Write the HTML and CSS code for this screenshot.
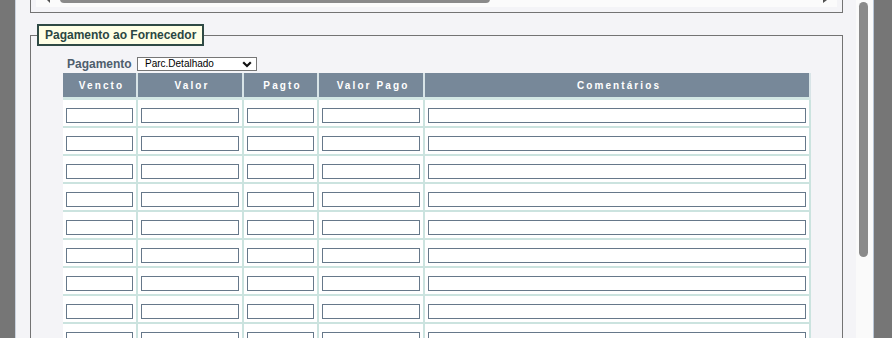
FILE: index.html
```html
<!DOCTYPE html>
<html lang="pt">
<head>
<meta charset="utf-8">
<title>Pagamento ao Fornecedor</title>
<link rel="stylesheet" href="styles.css">
</head>
<body>
<div class="side side-left"></div>
<div class="frame">
  <div class="content">
    <div class="topbox">
      <div class="hscroll">
        <svg class="hscroll-svg" width="801" height="7" viewBox="0 0 801 7">
          <polygon points="11,0 14,-3 14,3" fill="#505050"/>
          <rect x="24" y="-6" width="430" height="9" rx="4" fill="#8a8a8a"/>
          <polygon points="791,0 787,-3 787,3" fill="#505050"/>
        </svg>
      </div>
    </div>
    <fieldset class="panel">
      <legend class="panel-legend">Pagamento ao Fornecedor</legend>
      <div class="panel-body">
        <div class="pay-row">
          <span class="pay-label">Pagamento</span>
          <div class="select">
            <span class="select-text">Parc.Detalhado</span>
            <svg class="select-chevron" width="10" height="7" viewBox="0 0 10 7">
              <path d="M1.2 1.3 L5 5 L8.8 1.3" fill="none" stroke="#111" stroke-width="2.2"/>
            </svg>
          </div>
        </div>
        <table class="grid">
          <thead>
            <tr>
              <th class="c-venc">Vencto</th>
              <th class="c-valor">Valor</th>
              <th class="c-pagto">Pagto</th>
              <th class="c-vpago">Valor Pago</th>
              <th class="c-coment">Comentários</th>
            </tr>
          </thead>
          <tbody>
            <tr><td><input class="cell-input" type="text"></td><td><input class="cell-input" type="text"></td><td><input class="cell-input" type="text"></td><td><input class="cell-input" type="text"></td><td><input class="cell-input" type="text"></td></tr>
            <tr><td><input class="cell-input" type="text"></td><td><input class="cell-input" type="text"></td><td><input class="cell-input" type="text"></td><td><input class="cell-input" type="text"></td><td><input class="cell-input" type="text"></td></tr>
            <tr><td><input class="cell-input" type="text"></td><td><input class="cell-input" type="text"></td><td><input class="cell-input" type="text"></td><td><input class="cell-input" type="text"></td><td><input class="cell-input" type="text"></td></tr>
            <tr><td><input class="cell-input" type="text"></td><td><input class="cell-input" type="text"></td><td><input class="cell-input" type="text"></td><td><input class="cell-input" type="text"></td><td><input class="cell-input" type="text"></td></tr>
            <tr><td><input class="cell-input" type="text"></td><td><input class="cell-input" type="text"></td><td><input class="cell-input" type="text"></td><td><input class="cell-input" type="text"></td><td><input class="cell-input" type="text"></td></tr>
            <tr><td><input class="cell-input" type="text"></td><td><input class="cell-input" type="text"></td><td><input class="cell-input" type="text"></td><td><input class="cell-input" type="text"></td><td><input class="cell-input" type="text"></td></tr>
            <tr><td><input class="cell-input" type="text"></td><td><input class="cell-input" type="text"></td><td><input class="cell-input" type="text"></td><td><input class="cell-input" type="text"></td><td><input class="cell-input" type="text"></td></tr>
            <tr><td><input class="cell-input" type="text"></td><td><input class="cell-input" type="text"></td><td><input class="cell-input" type="text"></td><td><input class="cell-input" type="text"></td><td><input class="cell-input" type="text"></td></tr>
            <tr><td><input class="cell-input" type="text"></td><td><input class="cell-input" type="text"></td><td><input class="cell-input" type="text"></td><td><input class="cell-input" type="text"></td><td><input class="cell-input" type="text"></td></tr>
            <tr><td><input class="cell-input" type="text"></td><td><input class="cell-input" type="text"></td><td><input class="cell-input" type="text"></td><td><input class="cell-input" type="text"></td><td><input class="cell-input" type="text"></td></tr>
          </tbody>
        </table>
      </div>
    </fieldset>
  </div>
  <div class="vscroll">
    <div class="vthumb"></div>
  </div>
</div>
<div class="side side-right"></div>
</body>
</html>
```
FILE: styles.css
```css
html, body {
  margin: 0;
  padding: 0;
}
body {
  display: flex;
  height: 338px;
  overflow: hidden;
  background: #767676;
  font-family: "Liberation Sans", Arial, sans-serif;
}
.side {
  background: #767676;
  flex: none;
}
.side-left { width: 15px; }
.side-right { width: 18px; }

.frame {
  flex: none;
  width: 857px;
  display: flex;
  border-left: 1px solid #c9d2de;
  border-right: 1px solid #b9c6d6;
  overflow: hidden;
}
.content {
  width: 840px;
  flex: none;
  background: #f4f4f7;
  padding: 0 13px 0 14px;
  box-sizing: border-box;
  overflow: hidden;
}
.vscroll {
  width: 17px;
  flex: none;
  background: #fafafa;
  padding-top: 2px;
  box-sizing: border-box;
}
.vthumb {
  width: 9px;
  height: 255px;
  margin-left: 3px;
  border-radius: 5px;
  background: #8a8a8a;
}

.topbox {
  height: 13px;
  box-sizing: border-box;
  border: 1px solid #737373;
  border-top: none;
  padding: 0 5px 5px 5px;
}
.hscroll {
  height: 7px;
  background: #fbfbfb;
  overflow: hidden;
}
.hscroll-svg {
  display: block;
}

.panel {
  margin: 11px 0 0 0;
  padding: 0;
  border: 1px solid #737373;
  min-width: 0;
}
.panel-legend {
  margin-left: 6px;
  padding: 2px 6px;
  border: 2px solid #2f4a45;
  background: #ffffe6;
  color: #2b4743;
  font-weight: bold;
  font-size: 12px;
  line-height: 14px;
}
.panel-body {
  padding: 11px 0 20px 32px;
}
.pay-row {
  display: flex;
  align-items: center;
  height: 14px;
  margin-bottom: 2px;
}
.pay-label {
  margin-left: 4px;
  width: 70px;
  font-size: 12px;
  font-weight: bold;
  line-height: 14px;
  color: #4e5e6d;
}
.select {
  width: 120px;
  height: 14px;
  box-sizing: border-box;
  border: 1px solid #767676;
  background: #fff;
  display: flex;
  align-items: center;
  justify-content: space-between;
  padding: 0 4px 0 7px;
}
.select-text {
  font-size: 10px;
  line-height: 12px;
  color: #000;
}
.select-chevron {
  display: block;
}

.grid {
  width: 748px;
  table-layout: fixed;
  border-collapse: separate;
  border-spacing: 0;
}
.grid th {
  box-sizing: border-box;
  height: 27px;
  padding: 0 0 0 4px;
  background: #778899;
  color: #fff;
  font-size: 10px;
  font-weight: bold;
  letter-spacing: 2.1px;
  text-align: center;
  border-right: 2px solid #d8e4e7;
  border-bottom: 3px solid #d3e7e4;
}
.c-venc { width: 75px; }
.c-valor { width: 106px; }
.c-pagto { width: 75px; }
.c-vpago { width: 106px; }
.c-coment { width: 386px; }

.grid td {
  padding: 8px 3px 3px 3px;
  background: #fff;
  vertical-align: top;
  border-right: 2px solid #cbe3df;
  border-bottom: 2px solid #cbe3df;
}
.cell-input {
  display: block;
  width: 100%;
  height: 15px;
  box-sizing: border-box;
  margin: 0;
  padding: 0;
  border: 1px solid #66788a;
  background: #fff;
}
```
